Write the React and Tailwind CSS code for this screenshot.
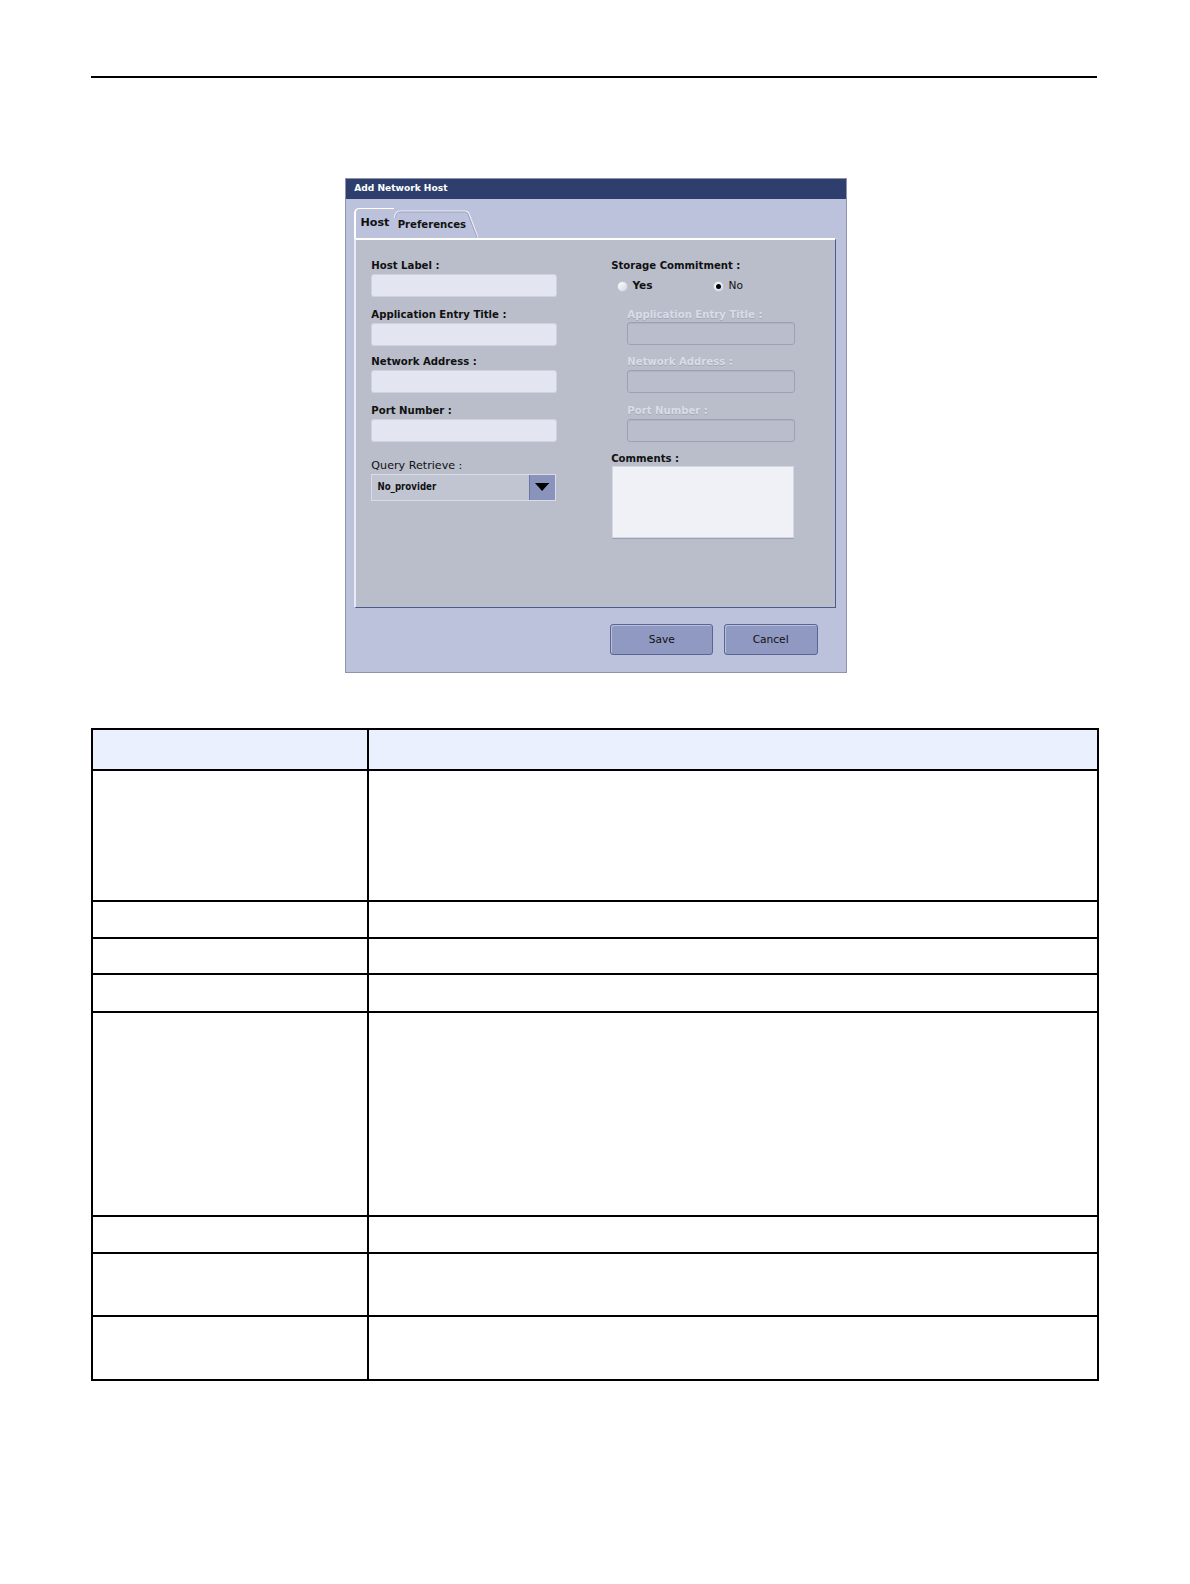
const font = { fontFamily: '"DejaVu Sans", Verdana, sans-serif' };

function Label({ children, disabled }) {
  return (
    <div
      className={`h-[14px] text-[10px] leading-[14px] font-bold whitespace-nowrap ${
        disabled ? "text-[#d9dce6] [text-shadow:0_1px_0_#a3a8b8]" : "text-[#111]"
      }`}
    >
      {children}
    </div>
  );
}

function Input({ disabled }) {
  return disabled ? (
    <div className="h-[23px] w-[166px] rounded-[3px] border border-[#9ca2b4] shadow-[inset_0_1px_0_#aeb3c2]" />
  ) : (
    <div className="h-[23px] w-[183px] rounded-[3px] border border-[#cfd3e0] bg-[#e3e6f0]" />
  );
}

function Radio({ checked }) {
  return (
    <span className="flex h-[11px] w-[11px] items-center justify-center rounded-full bg-gradient-to-br from-white to-[#d4d7e2] border border-[#c4c8d4]">
      {checked && <span className="h-[5px] w-[5px] rounded-full bg-black" />}
    </span>
  );
}

function Dialog() {
  return (
    <div className="ml-[251px] mt-[99px] h-[489px] w-[496px] border border-[#8d93ab] bg-[#bcc2db]" style={font}>
      <div className="flex h-[20px] items-center bg-[#2e3f6e] pl-[8px] text-[9px] font-bold text-white">
        Add Network Host
      </div>
      <div className="px-[8px]">
        <div className="mt-[8px] flex h-[30px] items-end">
          <div className="flex h-[29px] w-[39px] items-center justify-center rounded-tl-[5px] border-l-2 border-t border-white text-[11px] font-bold text-[#111]">
            Host
          </div>
          <div className="relative flex h-[27px] w-[84px] items-center pl-[4px] text-[10px] font-bold text-[#111]">
            <svg className="absolute left-0 top-0" width="84" height="27" viewBox="0 0 84 27">
              <path d="M0.5 8 Q1 1 6 1 L70 1 Q73 1 74 3 L83 27" fill="none" stroke="#eef0f8" strokeWidth="1" />
              <path d="M1.5 8 Q2 2 6 2 L70 2 Q72 2 73 4 L82 27" fill="none" stroke="#8d93ab" strokeWidth="0.6" />
            </svg>
            <span className="relative mt-[1px]">Preferences</span>
          </div>
        </div>
        <div className="h-[366px] w-[476px] border-l-2 border-t-2 border-l-[#e8ebf5] border-t-white border-r border-b border-r-[#4d5a8e] border-b-[#4d5a8e] bg-[#babecb]">
          <div className="flex pt-[19px]">
            <div className="ml-[15px] w-[183px]">
              <Label>Host Label :</Label>
              <div className="mt-[1px]"><Input /></div>
              <div className="mt-[10px]"><Label>Application Entry Title :</Label></div>
              <div className="mt-[1px]"><Input /></div>
              <div className="mt-[9px]"><Label>Network Address :</Label></div>
              <div className="mt-[1px]"><Input /></div>
              <div className="mt-[10px]"><Label>Port Number :</Label></div>
              <div className="mt-[1px]"><Input /></div>
              <div className="mt-[17px]">
                <div className="h-[14px] text-[11px] leading-[14px] font-medium text-[#111]">Query Retrieve :</div>
              </div>
              <div className="mt-[1px] flex h-[26px] w-[182px] border border-[#d9dce6] bg-[#c1c5d2]">
                <div
                  className="flex flex-1 items-center pl-[5px] text-[9.5px] font-bold text-[#111]"
                  style={{ fontFamily: '"DejaVu Sans Condensed", "Liberation Sans", sans-serif' }}
                >
                  No_provider
                </div>
                <div className="flex w-[25px] items-center justify-center border-l border-[#6d76a0] bg-[#8a93bb]">
                  <svg width="14" height="8" viewBox="0 0 14 8">
                    <path d="M0 0 H14 L7 8 Z" fill="#000" />
                  </svg>
                </div>
              </div>
            </div>
            <div className="ml-[54px] w-[190px]">
              <Label>Storage Commitment :</Label>
              <div className="mt-[6px] flex h-[14px] items-center text-[10.5px] font-bold text-[#111]">
                <div className="ml-[6px] flex w-[95px] items-center gap-[4px]">
                  <Radio />
                  <span>Yes</span>
                </div>
                <div className="flex items-center gap-[4px]">
                  <Radio checked />
                  <span className="font-normal">No</span>
                </div>
              </div>
              <div className="ml-[16px]">
                <div className="mt-[14px]"><Label disabled>Application Entry Title :</Label></div>
                <Input disabled />
                <div className="mt-[10px]"><Label disabled>Network Address :</Label></div>
                <div className="mt-[1px]"><Input disabled /></div>
                <div className="mt-[10px]"><Label disabled>Port Number :</Label></div>
                <div className="mt-[1px]"><Input disabled /></div>
              </div>
              <div className="mt-[10px]"><Label>Comments :</Label></div>
              <div className="ml-[1px] h-[71px] w-[180px] border border-[#d4d8e2] bg-[#eff1f7] shadow-[0_1px_0_#9aa0b2]" />
            </div>
          </div>
        </div>
        <div className="mt-[16px] flex justify-end gap-[10px] pr-[20px] text-[10.5px] font-medium text-[#111]">
          <button className="h-[30px] w-[102px] rounded-[3px] border border-[#5b6592] bg-[#8f99c1] shadow-[inset_1px_1px_0_#b8bfdc]">
            Save
          </button>
          <button className="h-[30px] w-[93px] rounded-[3px] border border-[#5b6592] bg-[#8f99c1] shadow-[inset_1px_1px_0_#b8bfdc]">
            Cancel
          </button>
        </div>
      </div>
    </div>
  );
}

const rows = [129, 37, 36, 37, 202, 36, 63, 63];

function Table() {
  return (
    <div className="mt-[54px] w-[996px] border-2 border-black">
      <div className="flex h-[39px] bg-[#eaf0fd]">
        <div className="w-[273px] border-r-2 border-black" />
        <div className="flex-1" />
      </div>
      {rows.map((h, i) => (
        <div key={i} className="flex border-t-2 border-black" style={{ height: h }}>
          <div className="w-[273px] border-r-2 border-black" />
          <div className="flex-1" />
        </div>
      ))}
    </div>
  );
}

export default function App() {
  return (
    <div className="bg-white pb-[40px] pl-[90px] pt-[75px] [zoom:1.012]">
      <div className="h-[2px] w-[994px] bg-black" />
      <Dialog />
      <Table />
    </div>
  );
}
